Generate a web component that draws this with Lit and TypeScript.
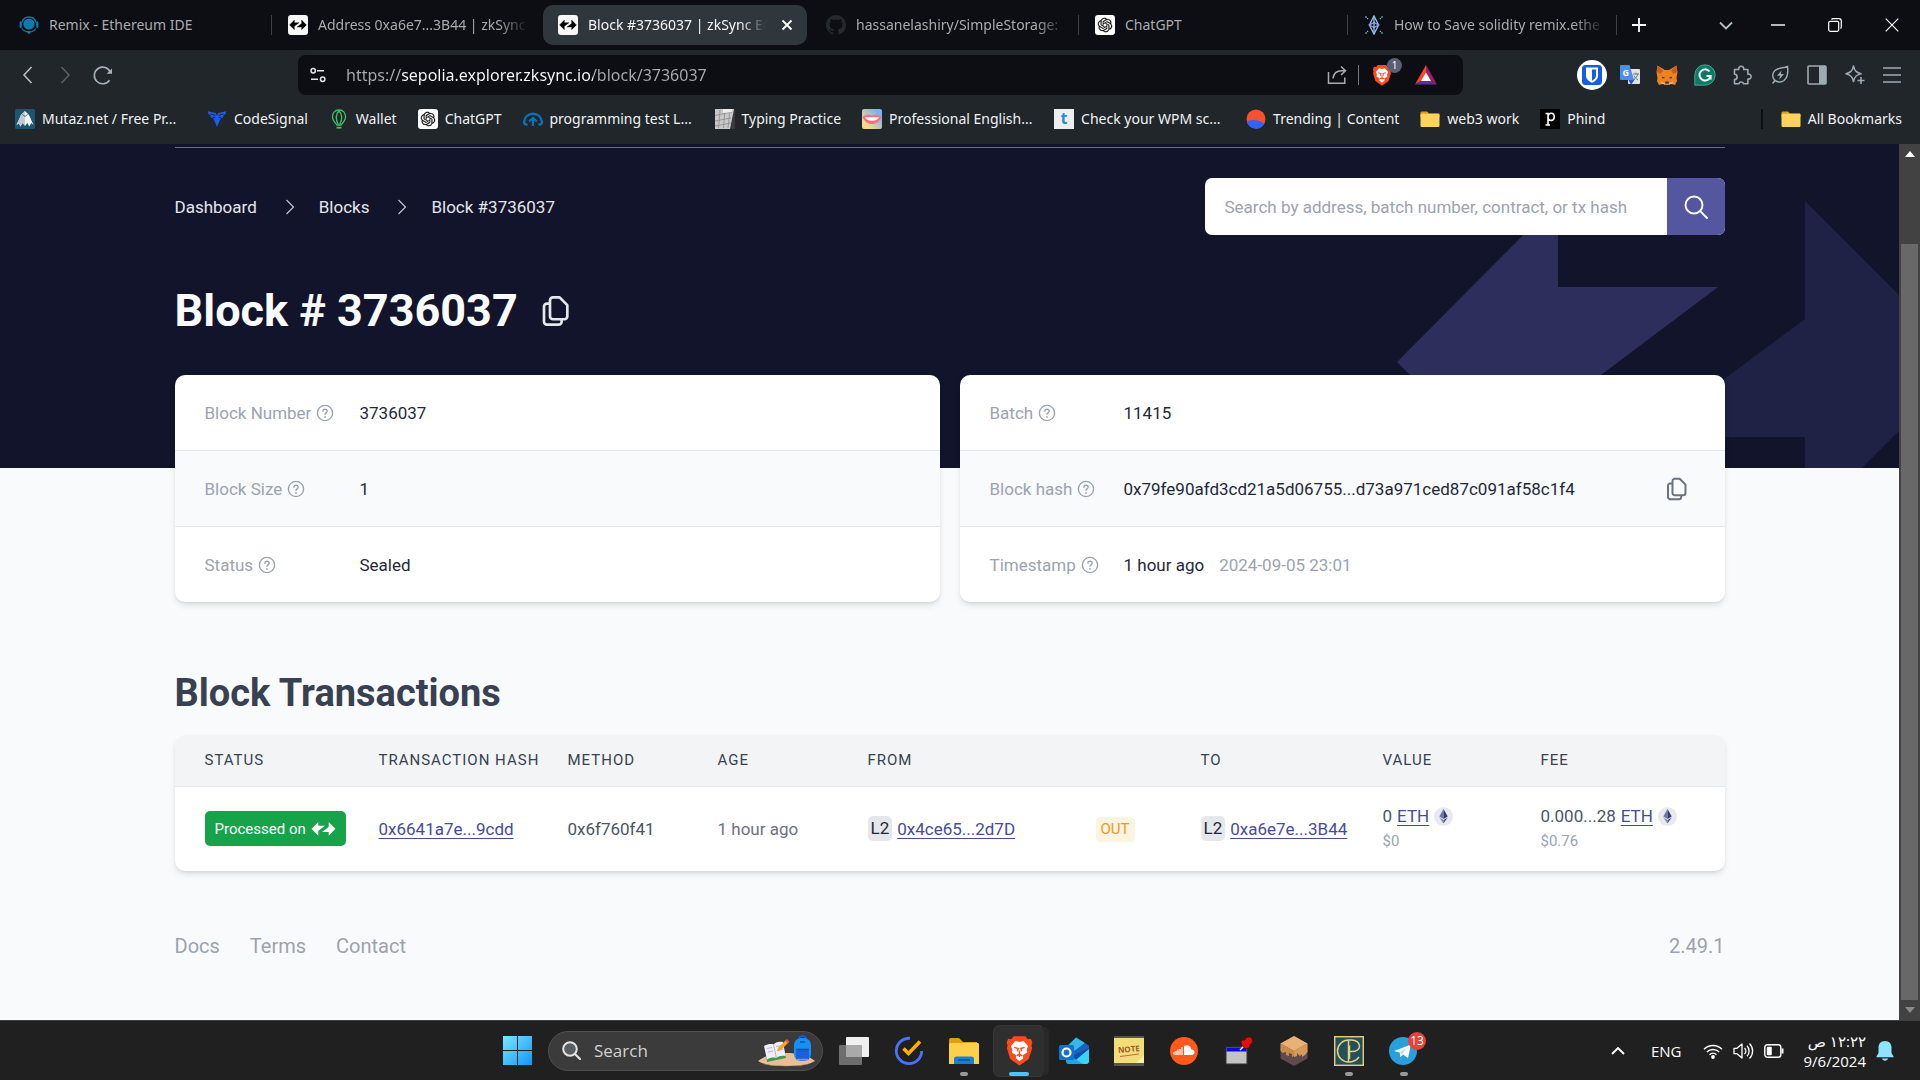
import { LitElement, html, svg, css, nothing, TemplateResult, SVGTemplateResult } from "lit";
import { customElement } from "lit/decorators.js";
import { classMap } from "lit/directives/class-map.js";

const icon = (w: number, h: number, viewBox: string, body: SVGTemplateResult | SVGTemplateResult[]): TemplateResult =>
  html`<svg class="icon" width=${w} height=${h} viewBox=${viewBox} fill="none" aria-hidden="true">${body}</svg>`;

const SYNC_LEFT = "M0 6.830 6.800 0V3.670H13.500L6.800 8.730V13.670Z";
const SYNC_RIGHT = "M24 6.830 17.200 13.670V10H10.500L17.200 5V0Z";

const OPENAI =
  "M22.2819 9.8211a5.9847 5.9847 0 0 0-.5157-4.9108 6.0462 6.0462 0 0 0-6.5098-2.9A6.0651 6.0651 0 0 0 4.9807 4.1818a5.9847 5.9847 0 0 0-3.9977 2.9 6.0462 6.0462 0 0 0 .7427 7.0966 5.98 5.98 0 0 0 .511 4.9107 6.051 6.051 0 0 0 6.5146 2.9001A5.9847 5.9847 0 0 0 13.2599 24a6.0557 6.0557 0 0 0 5.7718-4.2058 5.9894 5.9894 0 0 0 3.9977-2.9001 6.0557 6.0557 0 0 0-.7475-7.0729zm-9.022 12.6081a4.4755 4.4755 0 0 1-2.8764-1.0408l.1419-.0804 4.7783-2.7582a.7948.7948 0 0 0 .3927-.6813v-6.7369l2.02 1.1686a.071.071 0 0 1 .038.052v5.5826a4.504 4.504 0 0 1-4.4945 4.4944zm-9.6607-4.1254a4.4708 4.4708 0 0 1-.5346-3.0137l.142.0852 4.783 2.7582a.7712.7712 0 0 0 .7806 0l5.8428-3.3685v2.3324a.0804.0804 0 0 1-.0332.0615L9.74 19.9502a4.4992 4.4992 0 0 1-6.1408-1.6464zM2.3408 7.8956a4.485 4.485 0 0 1 2.3655-1.9728V11.6a.7664.7664 0 0 0 .3879.6765l5.8144 3.3543-2.0201 1.1685a.0757.0757 0 0 1-.071 0l-4.8303-2.7865A4.504 4.504 0 0 1 2.3408 7.872zm16.5963 3.8558L13.1038 8.364 15.1192 7.2a.0757.0757 0 0 1 .071 0l4.8303 2.7913a4.4944 4.4944 0 0 1-.6765 8.1042v-5.6772a.79.79 0 0 0-.407-.667zm2.0107-3.0231l-.142-.0852-4.7735-2.7818a.7759.7759 0 0 0-.7854 0L9.409 9.2297V6.8974a.0662.0662 0 0 1 .0284-.0615l4.8303-2.7866a4.4992 4.4992 0 0 1 6.6802 4.66zM8.3065 12.863l-2.02-1.1638a.0804.0804 0 0 1-.038-.0567V6.0742a4.4992 4.4992 0 0 1 7.3757-3.4537l-.142.0805L8.704 5.459a.7948.7948 0 0 0-.3927.6813zm1.0976-2.3654l2.602-1.4998 2.6069 1.4998v2.9994l-2.5974 1.4997-2.6067-1.4997Z";

const GITHUB =
  "M8 0C3.58 0 0 3.58 0 8c0 3.54 2.29 6.53 5.47 7.59.4.07.55-.17.55-.38 0-.19-.01-.82-.01-1.49-2.01.37-2.53-.49-2.69-.94-.09-.23-.48-.94-.82-1.13-.28-.15-.68-.52-.01-.53.63-.01 1.08.58 1.23.82.72 1.21 1.87.87 2.33.66.07-.52.28-.87.51-1.07-1.78-.2-3.64-.89-3.64-3.95 0-.87.31-1.59.82-2.15-.08-.2-.36-1.02.08-2.12 0 0 .67-.21 2.2.82.64-.18 1.32-.27 2-.27s1.36.09 2 .27c1.53-1.04 2.2-.82 2.2-.82.44 1.1.16 1.92.08 2.12.51.56.82 1.27.82 2.15 0 3.07-1.87 3.75-3.65 3.95.29.25.54.73.54 1.48 0 1.07-.01 1.93-.01 2.2 0 .21.15.46.55.38A8.01 8.01 0 0 0 16 8c0-4.42-3.58-8-8-8z";

const remixIcon = () =>
  icon(20, 20, "0 0 20 20", svg`
    <path d="M3 7.5a7.2 7.2 0 0 1 14 0" stroke="#0c7cab" stroke-width="1.4"/>
    <circle cx="10" cy="9" r="5.6" fill="#0c7cab"/>
    <rect x="0.6" y="6.5" width="2.2" height="6.5" rx="1.1" fill="#0c7cab"/>
    <rect x="17.2" y="6.5" width="2.2" height="6.5" rx="1.1" fill="#0c7cab"/>
    <path d="M3 13.5c1.5 2.5 4 3.4 7 3.4s5.500-.9 7-3.400" stroke="#0c7cab" stroke-width="1.200"/>
    <path d="M7.500 16.200h5L10 19.600Z" fill="#0c7cab"/>`);

const syncTile = () =>
  icon(20, 20, "0 0 20 20", svg`
    <rect width="20" height="20" rx="3" fill="#f7f7f7"/>
    <g transform="translate(1.600 5.100) scale(.7)" fill="#000" stroke="#000" stroke-width=".5"><path d=${SYNC_LEFT}/><path d=${SYNC_RIGHT}/></g>`);

const gptTile = () =>
  icon(20, 20, "0 0 20 20", svg`
    <rect width="20" height="20" rx="3" fill="#fff"/>
    <path transform="translate(2.800 2.800) scale(.6)" d=${OPENAI} fill="#111" stroke="#111" stroke-width=".3"/>`);

const githubIcon = () => icon(20, 20, "0 0 16 16", svg`<path d=${GITHUB} fill="#24292e"/>`);

const etherStack = () =>
  icon(20, 20, "0 0 20 20", svg`
    <g stroke="#a9bdf5" stroke-width="1.300">
      <path d="M10 1 14.600 10 10 19 5.400 10Z"/><path d="M5.400 10 10 12.500 14.600 10 10 7.500Z" stroke="#8c9df0"/><path d="M10 1v18" stroke="#8fc3ea"/>
      <path d="M1.500 1.500 4 4M18.500 1.500 16 4M1.500 18.500 4 16M18.500 18.500 16 16" stroke="#7fd0d8" stroke-dasharray="1.500 1"/>
    </g>`);

const folder = () =>
  icon(20, 20, "0 0 20 20", svg`
    <path d="M.5 4c0-1 .6-1.500 1.500-1.500h5l2 2h9.500c.6 0 1 .5 1 1V8H.5Z" fill="#d9a21b"/>
    <rect x=".5" y="4.800" width="19" height="13.200" rx="1.200" fill="#fdd35e"/>`);

const lion = (s: number) =>
  icon(s, s, "0 0 24 24", svg`
    <path d="M7.500 1h9l2 2.200 2.300-.3L22 6l-.8 2 .6 2-2.600 8.500L12 23.600 4.800 18.500 2.200 10l.6-2L2 6l1.200-3.100 2.300.3Z" fill="#fb4a1c"/>
    <path d="M12 5.400 15.200 4.600 18.600 8.600 17.500 11.600 18 13.500 14.600 15.600 14.800 18 12 20.400 9.200 18 9.400 15.600 6 13.500 6.500 11.600 5.400 8.600 8.800 4.600Z" fill="#fff"/>
    <path d="M8 9.600 11 10.500 10.300 12.600M16 9.600 13 10.500 13.700 12.600M12 12v3M9.800 16 12 15l2.200 1M12 15v2" stroke="#fb4a1c" stroke-width="1.100"/>`);

interface Tab { label: string; icon: () => TemplateResult; active?: boolean; divider?: boolean; fade?: boolean; }
const TABS: Tab[] = [
  { label: "Remix - Ethereum IDE", icon: remixIcon, divider: true },
  { label: "Address 0xa6e7...3B44 | zkSync", icon: syncTile, fade: true },
  { label: "Block #3736037 | zkSync Er", icon: syncTile, active: true, fade: true },
  { label: "hassanelashiry/SimpleStorage:", icon: githubIcon, divider: true, fade: true },
  { label: "ChatGPT", icon: gptTile, divider: true },
  { label: "How to Save solidity remix.ethe", icon: etherStack, divider: true, fade: true },
];

interface Bookmark { label: string; icon: () => TemplateResult; long?: boolean; }
const BOOKMARKS: Bookmark[] = [
  { label: "Mutaz.net / Free Pr...", long: true, icon: () => icon(20, 20, "0 0 20 20", svg`
      <rect width="20" height="20" rx="1.500" fill="#1b5672"/>
      <path d="M1.500 16 6 6l4-4 4 4 4.500 10-2.200-2-2 3.500-2-3.500L10 17l-2.500-3-2 3.500-1.600-3Z" fill="#f2f4f5"/>
      <path d="M1.500 16 6 6l4-4v14.500L7.500 14l-2 3.500-1.600-3Z" fill="#c3c9ce"/><path d="M7.500 5.500l2.500 2 2.500-2" stroke="#55707d"/>`) },
  { label: "CodeSignal", icon: () => icon(20, 20, "0 0 20 20", svg`
      <path d="M.8 2.200 8.800 4 10 6.500 11.200 4l8-1.800-.6 3-1.800.6-.6 2.700-2.600 1-3.600 8.600L6.400 9.500l-2.600-1-.6-2.700-1.800-.6Z" fill="#1d5cf0"/>
      <path d="M3.500 5 8.500 6.300M5.500 8l3 .8M16.500 5l-5 1.300M14.500 8l-3 .8" stroke="#20262a" stroke-width=".9"/>`) },
  { label: "Wallet", icon: () => icon(20, 20, "0 0 20 20", svg`
      <g stroke="#3fc164" stroke-width="1.300"><path d="M10 1C5.500 1 3.500 4.500 3.500 8c0 3.300 2.200 5.500 4.500 8h4c2.300-2.500 4.500-4.700 4.500-8 0-3.500-2-7-6.500-7Z"/>
      <path d="M10 2C7 5 6.500 10 9.200 15.500M10 2c3 3 3.500 8 .8 13.500"/><path d="M7.500 18.700h5" stroke-width="1.800"/></g>`) },
  { label: "ChatGPT", icon: gptTile },
  { label: "programming test L...", long: true, icon: () => icon(20, 20, "0 0 20 20", svg`
      <path d="M4.500 15.500H3A2 2 0 0 1 1.200 13C1.500 8 5 4.800 10 4.800S18.500 8 18.800 13a2 2 0 0 1-1.800 2.500h-1.500" stroke="#0c72b5" stroke-width="2.400"/>
      <path d="M10 17V9.500M6 12.500l4-3.500 4 3.500" stroke="#0c72b5" stroke-width="2.200"/>`) },
  { label: "Typing Practice", icon: () => icon(20, 20, "0 0 20 20", svg`
      <rect width="20" height="20" fill="#3a3a3c"/><path d="M0 0h19l-4 20H0Z" fill="#c9c9c9"/>
      <path d="M0 6.500 17 3M0 12l16-3M0 17l16-3M5 1 3.500 19M10 0 8.500 19M15 0l-2 19" stroke="#8b8b8b" stroke-width=".8"/><path d="M8 0h9v3L8 4Z" fill="#eee"/>`) },
  { label: "Professional English...", long: true, icon: () => icon(20, 20, "0 0 20 20", svg`
      <defs><linearGradient id="lip" x1="0" y1="1" x2="1" y2="0"><stop offset=".2" stop-color="#f7d98c"/><stop offset=".8" stop-color="#7fb2f2"/></linearGradient></defs>
      <rect width="20" height="20" rx="2" fill="url(#lip)"/><path d="M.5 8C4 5 8 5.500 10 6.500c2-1 6-1.500 9.500 1.500-2.500 5-5.500 7-9.500 7S3 13 .5 8Z" fill="#f4717f"/>
      <path d="M2.800 8.300h14.400C15.500 11 13 11.800 10 11.800S4.500 11 2.800 8.300Z" fill="#fff"/>`) },
  { label: "Check your WPM sc...", long: true, icon: () => icon(20, 20, "0 0 20 20", svg`
      <rect width="20" height="20" fill="#eceef0"/><text x="10" y="15" font-size="16" font-weight="700" font-family="Open Sans" text-anchor="middle" fill="#1f8fe0">t</text>`) },
  { label: "Trending | Content", icon: () => icon(20, 20, "0 0 20 20", svg`
      <circle cx="10" cy="10" r="9.500" fill="#f4512c"/><path d="M.8 12.500C7 9.500 14 11 18.200 15A9.500 9.500 0 0 1 .8 12.500Z" fill="#2f63ff"/>`) },
  { label: "web3 work", icon: folder },
  { label: "Phind", icon: () => icon(20, 20, "0 0 20 20", svg`
      <rect width="20" height="20" fill="#000"/><path d="M5.500 4.500h2.500V16M8 8c0-2 1.200-3.700 3.200-3.700s3 1.500 3 3.500-1 3.600-3 3.600-3.200-1.400-3.200-3.400M5.500 16h4.500" stroke="#fff" stroke-width="1.600"/>`) },
];

const EXTENSIONS: { name: string; art: () => TemplateResult }[] = [
  { name: "Bitwarden", art: () => icon(30, 30, "0 0 30 30", svg`
      <circle cx="15" cy="15" r="15" fill="#fff"/><rect x="5" y="5" width="20" height="20" rx="3.500" fill="#175ddc"/>
      <path d="M9 7.500h12v8c0 4-3.500 6.200-6 7.300-2.500-1.100-6-3.300-6-7.300Z" fill="#fff"/><path d="M15 9.500h4v6c0 2.500-2 4.200-4 5.200Z" fill="#175ddc"/>`) },
  { name: "Translate", art: () => icon(22, 22, "0 0 22 22", svg`
      <rect x="9" y="5" width="12" height="15" rx="1" fill="#dfe3e8"/><path d="M9 15h7l-4 6Z" fill="#3450c9"/>
      <path d="M1 2a1 1 0 0 1 1-1h8.500L15 16H2a1 1 0 0 1-1-1Z" fill="#4d8bf5"/>
      <text x="6.800" y="12" font-size="9" font-weight="700" font-family="Open Sans" text-anchor="middle" fill="#fff">G</text>
      <path d="M14 10h6M17 8.500V10M18.800 10c-.5 2.500-2.500 4.500-4 5.500M15 11.500c.8 2 2.500 3.500 4 4.500" stroke="#6c7686"/>`) },
  { name: "MetaMask", art: () => icon(22, 22, "0 0 22 22", svg`
      <path d="M1.500 1.500 9 6h4l7.500-4.500L21.500 8l-1 6 .5 3-2 4-4.500-1.300-2 1.300h-3l-2-1.300L3 21l-2-4 .5-3-1-6Z" fill="#f0811f"/>
      <path d="M1.500 1.500 7 6.500 4.500 10 1 8ZM20.500 1.500 15 6.500l2.500 3.500L21 8Z" fill="#c2601f"/>
      <path d="M6 12.500l3.300 1.600-2.800.3ZM16 12.500l-3.300 1.600 2.800.3Z" fill="#233447"/><path d="M9.500 17.500h3l.5 2h-4Z" fill="#2b3a4a"/><path d="M5 17.500 9 19.500v1.300L5.500 19.500ZM17 17.500 13 19.500v1.300l3.500-1.300Z" fill="#d9bfad"/>`) },
  { name: "Grammarly", art: () => icon(22, 22, "0 0 22 22", svg`
      <path d="M11 .8a10.200 10.200 0 0 1 0 20.400H.8V11A10.200 10.200 0 0 1 11 .8Z" fill="#0b7a67"/>
      <path d="M11 .8a10.200 10.200 0 0 1 0 20.400H.8V11A10.200 10.200 0 0 1 11 .8Z" stroke="#56b8a4" stroke-width=".8"/>
      <path d="M15.500 7.500A5.600 5.600 0 1 0 16.600 12H12.500M16.600 12v3.500" stroke="#fff" stroke-width="2"/>`) },
  { name: "Extensions", art: () => icon(22, 22, "0 0 22 22", svg`
      <path d="M3.500 5.500h4.200a2.600 2.600 0 1 1 5 0h4.200v4.700a2.500 2.500 0 1 1 0 4.800v4.800h-4.300a2.500 2.500 0 0 0-4.800 0H3.500v-4.300a2.600 2.600 0 1 0 0-5.200Z" stroke="#9dabb3" stroke-width="1.600" stroke-linejoin="round"/>`) },
  { name: "Energy saver", art: () => icon(22, 22, "0 0 22 22", svg`
      <path d="M18.500 2.500c.8 6 .2 11-3.500 14-3 2.300-7.500 1.700-9.700-.8-2.200-2.700-2.100-6.700.7-9.200 3.500-3 8-2.200 12.500-4ZM3.500 19.500l2.300-2.700" stroke="#9dabb3" stroke-width="1.500"/>
      <path d="M12.500 6.500 8 11.800h3L10.200 15.800 15 10h-3.200Z" fill="#9dabb3"/>`) },
  { name: "Sidebar", art: () => icon(22, 22, "0 0 22 22", svg`
      <rect x="2" y="2" width="18" height="18" rx="1" stroke="#9dabb3" stroke-width="1.600"/><rect x="13" y="2" width="7" height="18" fill="#9dabb3"/>`) },
  { name: "Leo", art: () => icon(22, 22, "0 0 22 22", svg`
      <path d="M9.500 2c.8 4.500 2.500 6.500 7.500 7.700-5 1.200-6.700 3.200-7.500 7.800C8.700 13 7 11 2 9.700 7 8.500 8.700 6.500 9.500 2Z" stroke="#9dabb3" stroke-width="1.600" stroke-linejoin="round"/>
      <path d="M17 13v7M13.500 16.500h7" stroke="#9dabb3" stroke-width="1.600"/>`) },
  { name: "Menu", art: () => icon(22, 22, "0 0 22 22", svg`<path d="M2 4h18M2 11h18M2 18h18" stroke="#9dabb3" stroke-width="1.500"/>`) },
];

const controls = css`
  * { box-sizing: border-box; }
  button { appearance: none; border: 0; padding: 0; margin: 0; background: none; color: inherit; font: inherit; display: flex; align-items: center; justify-content: center; cursor: pointer; }
  a { color: inherit; text-decoration: none; }
  input { border: 0; outline: 0; padding: 0; margin: 0; background: none; font: inherit; color: inherit; min-width: 0; }
  ul { list-style: none; margin: 0; padding: 0; }
  .icon { display: block; flex: none; }
`;

@customElement("browser-chrome")
export class BrowserChrome extends LitElement {
  static styles = [controls, css`
    :host { display: block; flex: none; background: #20262a; color: #f1f3f4; font-family: "Segoe UI", "Noto Sans", "Open Sans", sans-serif; font-size: 14px; }
    .strip { display: flex; align-items: center; height: 50px; padding-left: 3px; background: #0d0e13; }
    .tabs { display: grid; grid-template-columns: repeat(6, minmax(0, 1fr)); flex: 0 1 1614px; min-width: 0; height: 40px; }
    .tab { position: relative; display: flex; align-items: center; gap: 10px; min-width: 0; padding: 0 8px 0 16px; color: #a9abae; border-radius: 10px; }
    .tab.active { margin: 0 3px 0 2px; padding: 0 12px 0 15px; background: #30373c; color: #f4f5f6; }
    .tab.divider::after { content: ""; position: absolute; right: 0; top: 10px; width: 1px; height: 20px; background: #384247; }
    .title { flex: 1; display: block; min-width: 0; height: 20px; line-height: 20px; text-align: left; white-space: nowrap; overflow: hidden; }
    .fade { -webkit-mask-image: linear-gradient(90deg, #000 84%, transparent 98%); mask-image: linear-gradient(90deg, #000 84%, transparent 98%); }
    .close { width: 16px; height: 16px; }
    .new { width: 44px; height: 40px; }
    .window { display: flex; margin-left: auto; align-items: center; }
    .window button { width: 57px; height: 50px; }
    .window .list { width: 46px; }
    .bar { display: flex; align-items: center; height: 50px; padding: 0 13px 0 16px; }
    .nav { display: flex; gap: 16px; width: 282px; flex: none; }
    .nav button { width: 22px; height: 22px; }
    .address { display: flex; align-items: center; flex: 0 1 1165px; height: 40px; padding: 0 22px 0 12px; border-radius: 8px; background: #0d0e13; }
    .url { flex: 1; height: 30px; margin-left: 20px; font-size: 16px; color: transparent;
      background: linear-gradient(90deg, #a9adb3 55px, #fff 55px, #fff 247px, #a9adb3 247px); -webkit-background-clip: text; background-clip: text; }
    .address button { width: 30px; height: 30px; }
    .rule { width: 1px; height: 20px; margin: 0 8px 0 6px; background: #777b80; }
    .shield { position: relative; margin-right: 14px; }
    .count { position: absolute; top: -2px; right: -5px; width: 15px; height: 15px; border-radius: 8px; background: #5b5f72; color: #fff; font-size: 10px; line-height: 15px; text-align: center; }
    .exts { display: flex; flex: none; width: 330px; margin-left: auto; justify-content: space-between; }
    .exts button { width: 30px; height: 30px; }
    .marks { display: flex; align-items: center; height: 44px; padding: 0 18px 6px 15px; white-space: nowrap; }
    .marks ul { display: flex; gap: 21px; }
    .mark { display: flex; align-items: center; gap: 7px; height: 20px; line-height: 20px; }
    .mark.long { width: 171px; }
    .all { display: flex; margin-left: auto; padding-left: 18px; border-left: 2px solid #0d0e13; }
  `];

  private tab(t: Tab) {
    return html`<li class=${classMap({ tab: true, active: !!t.active, divider: !!t.divider })}>
      ${t.icon()}<button class=${classMap({ title: true, fade: !!t.fade })}>${t.label}</button>
      ${t.active ? html`<button class="close" aria-label="Close tab">${icon(12, 12, "0 0 12 12", svg`<path d="M1.500 1.500l9 9M10.500 1.500l-9 9" stroke="#fff" stroke-width="1.800"/>`)}</button>` : nothing}
    </li>`;
  }

  render() {
    return html`
      <div class="strip">
        <ul class="tabs">${TABS.map((t) => this.tab(t))}</ul>
        <button class="new" aria-label="New tab">${icon(14, 14, "0 0 14 14", svg`<path d="M7 0v14M0 7h14" stroke="#fff" stroke-width="1.800"/>`)}</button>
        <div class="window">
          <button class="list" aria-label="Search tabs">${icon(14, 9, "0 0 14 9", svg`<path d="M1 1.500l6 6 6-6" stroke="#b4c0c6" stroke-width="1.800"/>`)}</button>
          <button aria-label="Minimize">${icon(14, 2, "0 0 14 2", svg`<path d="M0 1h14" stroke="#fff" stroke-width="1.400"/>`)}</button>
          <button aria-label="Restore">${icon(14, 14, "0 0 14 14", svg`<rect x=".7" y="3.300" width="10" height="10" rx="1.500" stroke="#fff" stroke-width="1.200"/><path d="M3.500 1.500C4 .9 4.500.7 5 .7h6a2.300 2.300 0 0 1 2.300 2.300v6c0 .7-.3 1.200-.8 1.600" stroke="#fff" stroke-width="1.200"/>`)}</button>
          <button aria-label="Close window">${icon(14, 14, "0 0 14 14", svg`<path d="M.7.7l12.600 12.600M13.300.7.7 13.300" stroke="#fff" stroke-width="1.200"/>`)}</button>
        </div>
      </div>
      <div class="bar">
        <div class="nav">
          <button aria-label="Back">${icon(20, 20, "0 0 20 20", svg`<path d="M14.500 2 7 10l7.500 8" stroke="#bac3c8" stroke-width="1.500"/>`)}</button>
          <button aria-label="Forward">${icon(20, 20, "0 0 20 20", svg`<path d="M6.500 2 14 10l-7.500 8" stroke="#596167" stroke-width="1.500"/>`)}</button>
          <button aria-label="Reload">${icon(20, 20, "0 0 20 20", svg`<path d="M16.500 15.200A8.300 8.300 0 1 1 17.400 7.500" stroke="#a7b3ba" stroke-width="1.600"/><path d="M19 3.500v5.300h-5.300Z" fill="#a7b3ba"/>`)}</button>
        </div>
        <div class="address">
          ${icon(16, 16, "0 0 16 16", svg`<g stroke="#e3e6e8" stroke-width="1.500"><circle cx="3.200" cy="3.700" r="2.200"/><path d="M7 3.700h7M1 12.300h7"/><circle cx="12.700" cy="12.300" r="2.200"/></g>`)}
          <input class="url" type="text" aria-label="Address" .value=${"https://sepolia.explorer.zksync.io/block/3736037"} />
          <button aria-label="Share">${icon(20, 20, "0 0 20 20", svg`<path d="M1.500 7v11.300h16.300V12.500" stroke="#a6acb1" stroke-width="1.500"/><path d="M6 13.500C6.500 8.500 9.500 5.800 15 5.800h3M14 1.500l4.500 4.300L14 10" stroke="#a6acb1" stroke-width="1.500"/>`)}</button>
          <span class="rule"></span>
          <button class="shield" aria-label="Shields">${lion(22)}<span class="count">1</span></button>
          <button aria-label="Rewards">${icon(22, 20, "0 0 22 20", svg`<path d="M11 0 0 19.500 11 12.500Z" fill="#ff4724"/><path d="M11 0v12.500l11 7Z" fill="#9e1f63"/><path d="M0 19.500h22l-11-7Z" fill="#662d91"/><path d="M11 7.500 6 16h10Z" fill="#fff"/>`)}</button>
        </div>
        <div class="exts">${EXTENSIONS.map((e) => html`<button aria-label=${e.name}>${e.art()}</button>`)}</div>
      </div>
      <nav class="marks">
        <ul>${BOOKMARKS.map((b) => html`<li><a href="#" class=${classMap({ mark: true, long: !!b.long })}>${b.icon()}<span>${b.label}</span></a></li>`)}</ul>
        <div class="all"><a href="#" class="mark">${folder()}<span>All Bookmarks</span></a></div>
      </nav>`;
  }
}

const help = () =>
  icon(18, 18, "0 0 18 18", svg`<g stroke="#9ca3af" stroke-width="1.400" stroke-linecap="round"><circle cx="9" cy="9" r="7.600"/><path d="M6.900 7.200c0-1.200.9-2 2.100-2s2.200.8 2.200 1.900c0 1.700-2.200 1.700-2.200 3.200"/><path d="M9 12.800v.1" stroke-width="1.700"/></g>`);

const copy = (s: number, color: string) =>
  icon(s, s, "0 0 24 24", svg`<g stroke=${color} stroke-width="2" stroke-linejoin="round"><path d="M7.500 4a2.200 2.200 0 0 1 2.200-2.200h5L20.500 7.600V16a2.200 2.200 0 0 1-2.200 2.200H9.700A2.200 2.200 0 0 1 7.500 16Z"/><path d="M7.500 6.500H5.200A2.200 2.200 0 0 0 3 8.700V20a2.200 2.200 0 0 0 2.200 2.200h8.800A2.200 2.200 0 0 0 16.200 20v-1.800"/></g>`);

const eth = () =>
  icon(19, 19, "0 0 19 19", svg`
    <circle cx="9.500" cy="9.500" r="9.500" fill="#e8e9ee"/><path d="M9.500 2 5.300 9.500l4.200 2.400Z" fill="#7076a8"/><path d="M9.500 2l4.200 7.500-4.200 2.400Z" fill="#343c70"/>
    <path d="M5.300 10.600l4.200 6v-3.500Z" fill="#8086b4"/><path d="M13.700 10.600l-4.200 6v-3.500Z" fill="#4b5288"/>`);

interface Fact { label: string; value: string; extra?: string; copyable?: boolean; }
const FACTS: { wide: boolean; rows: Fact[] }[] = [
  { wide: true, rows: [
    { label: "Block Number", value: "3736037" },
    { label: "Block Size", value: "1" },
    { label: "Status", value: "Sealed" } ] },
  { wide: false, rows: [
    { label: "Batch", value: "11415" },
    { label: "Block hash", value: "0x79fe90afd3cd21a5d06755...d73a971ced87c091af58c1f4", copyable: true },
    { label: "Timestamp", value: "1 hour ago", extra: "2024-09-05 23:01" } ] },
];

@customElement("block-page")
export class BlockPage extends LitElement {
  static styles = [controls, css`
    :host { display: flex; flex: 1; min-height: 0; background: #f9fafc; color: #1f2937; font-family: Roboto, sans-serif; font-size: 17px; line-height: 24px; }
    main { flex: 1; min-width: 0; }
    .wrap { position: relative; max-width: 1550px; margin: 0 auto; }
    .hero { position: relative; overflow: hidden; padding: 3px 0 132px; background: #11142b; color: #e5e7eb; }
    .art { position: absolute; right: 0; top: 0; }
    .top { display: flex; align-items: center; justify-content: space-between; padding-top: 30px; border-top: 1px solid #6b6d7e; }
    .crumbs { display: flex; align-items: center; gap: 24px; }
    .search { display: flex; width: 520px; height: 57px; border-radius: 7px; overflow: hidden; background: #fff; }
    .search input { flex: 1; padding-left: 20px; color: #374151; }
    .search input::placeholder { color: #9ca3af; opacity: 1; }
    .search button { width: 58px; background: #5457a0; }
    h1 { display: flex; align-items: center; gap: 22px; margin: 51px 0 0; font-size: 45px; line-height: 50px; font-weight: 700; color: #f9fafb; }
    .cards { display: grid; grid-template-columns: 1fr 1fr; gap: 20px; margin-top: -93px; }
    .card, .table { border-radius: 10px; overflow: hidden; background: #fff; box-shadow: 0 4px 7px -1px #0000001c, 0 2px 4px -2px #0000001c; }
    .card { margin: 0; }
    .fact { display: grid; grid-template-columns: 134px 1fr auto; align-items: center; height: 75px; padding: 0 36px 0 30px; }
    .wide .fact { grid-template-columns: 155px 1fr auto; }
    .fact + .fact { height: 76px; border-top: 1px solid #e5e7eb; }
    .fact:nth-child(even) { background: #f9fafc; }
    dt { display: flex; align-items: center; gap: 5px; color: #9ca3af; white-space: nowrap; }
    dd { margin: 0; }
    .muted { margin-left: 15px; color: #9ca3af; }
    h2 { margin: 69px 0 19px; font-size: 38px; line-height: 45px; font-weight: 700; color: #374151; }
    table { width: 100%; table-layout: fixed; border-collapse: collapse; }
    th { height: 51px; padding: 0; background: #f3f4f6; border-bottom: 1px solid #e5e7eb; text-align: left; font-size: 15px; line-height: 20px; font-weight: 400; letter-spacing: 1px; color: #374151; white-space: nowrap; }
    td { height: 85px; padding: 0; white-space: nowrap; color: #4b5563; }
    th:first-child, td:first-child { padding-left: 30px; }
    .c-status { width: 204px; } .c-hash { width: 189px; } .c-mid { width: 150px; } .c-from { width: 228px; } .c-dir { width: 105px; } .c-to { width: 182px; } .c-value { width: 158px; }
    .link { color: #474c9a; text-decoration: underline; text-underline-offset: 3px; text-decoration-thickness: 1px; }
    .ok { display: inline-flex; align-items: center; gap: 5px; height: 35px; padding: 0 10px; border-radius: 5px; background: #17a34a; color: #fff; font-size: 15px; vertical-align: middle; }
    .age { color: #6b7280; }
    .party { display: flex; align-items: center; gap: 5px; }
    .layer { padding: 0 3px; border-radius: 5px; background: #e5e7eb; color: #1f2937; line-height: 25px; }
    .out { display: inline-block; padding: 0 5px; border-radius: 5px; background: #fdf3e1; color: #ec9a1c; font-size: 15px; line-height: 25px; vertical-align: middle; }
    .amount { display: flex; align-items: center; gap: 5px; line-height: 25px; }
    .usd { font-size: 15px; line-height: 25px; color: #9ca3af; }
    footer { display: flex; gap: 30px; margin-top: 60px; font-size: 20px; line-height: 30px; color: #9ca3af; }
    .version { margin-left: auto; }
    .scroll { display: flex; flex-direction: column; flex: none; width: 21px; padding: 0 2px; background: #424242; }
    .scroll button { height: 20px; }
    .thumb { flex: 1; margin-top: 80px; background: #686868; }
  `];

  render() {
    return html`
      <main>
        <header class="hero">
          <svg class="art" width="520" height="324" viewBox="1379 144 520 324" aria-hidden="true">
            <path d="M1558 200V287H1718L1577 393H1428L1397 362Z" fill="#2d2e5c"/>
            <path d="M1805 201 1940 336V390L1862 468H1805V437H1646L1805 319Z" fill="#1f2145"/>
          </svg>
          <div class="wrap">
            <div class="top">
              <nav class="crumbs">
                <a href="#">Dashboard</a>${this.arrow()}<a href="#">Blocks</a>${this.arrow()}<span>Block #3736037</span>
              </nav>
              <form class="search" @submit=${(e: Event) => e.preventDefault()}>
                <input type="text" aria-label="Search" placeholder="Search by address, batch number, contract, or tx hash" />
                <button aria-label="Search">${icon(24, 24, "0 0 24 24", svg`<g stroke="#fff" stroke-width="1.900" stroke-linecap="round"><circle cx="10" cy="10" r="8.500"/><path d="M16.200 16.200 23 23"/></g>`)}</button>
              </form>
            </div>
            <h1>Block # 3736037 <button aria-label="Copy block number">${copy(32, "#e5e7eb")}</button></h1>
          </div>
        </header>
        <div class="wrap">
          <section class="cards">
            ${FACTS.map((c) => html`<dl class=${classMap({ card: true, wide: c.wide })}>
              ${c.rows.map((r) => html`<div class="fact">
                <dt>${r.label} ${help()}</dt>
                <dd>${r.value}${r.extra ? html`<span class="muted">${r.extra}</span>` : nothing}</dd>
                ${r.copyable ? html`<button aria-label="Copy block hash">${copy(24, "#6b7280")}</button>` : nothing}
              </div>`)}
            </dl>`)}
          </section>
          <h2>Block Transactions</h2>
          <div class="table">
            <table>
              <colgroup><col class="c-status" /><col class="c-hash" /><col class="c-mid" /><col class="c-mid" /><col class="c-from" /><col class="c-dir" /><col class="c-to" /><col class="c-value" /><col /></colgroup>
              <thead><tr><th>STATUS</th><th>TRANSACTION HASH</th><th>METHOD</th><th>AGE</th><th>FROM</th><th></th><th>TO</th><th>VALUE</th><th>FEE</th></tr></thead>
              <tbody><tr>
                <td><span class="ok">Processed on ${icon(25, 14, "0 0 24 14", svg`<g fill="#fff"><path d=${SYNC_LEFT}/><path d=${SYNC_RIGHT}/></g>`)}</span></td>
                <td><a href="#" class="link">0x6641a7e...9cdd</a></td>
                <td>0x6f760f41</td>
                <td class="age">1 hour ago</td>
                <td><div class="party"><span class="layer">L2</span><a href="#" class="link">0x4ce65...2d7D</a></div></td>
                <td><span class="out">OUT</span></td>
                <td><div class="party"><span class="layer">L2</span><a href="#" class="link">0xa6e7e...3B44</a></div></td>
                <td><div class="amount">0 <a href="#" class="link">ETH</a>${eth()}</div><div class="usd">$0</div></td>
                <td><div class="amount">0.000...28 <a href="#" class="link">ETH</a>${eth()}</div><div class="usd">$0.76</div></td>
              </tr></tbody>
            </table>
          </div>
          <footer><a href="#">Docs</a><a href="#">Terms</a><a href="#">Contact</a><span class="version">2.49.1</span></footer>
        </div>
      </main>
      <div class="scroll">
        <button aria-label="Scroll up">${icon(10, 6, "0 0 10 6", svg`<path d="M5 0l5 6H0Z" fill="#fff"/>`)}</button>
        <div class="thumb"></div>
        <button aria-label="Scroll down">${icon(10, 6, "0 0 10 6", svg`<path d="M5 6 0 0h10Z" fill="#8a8a8a"/>`)}</button>
      </div>`;
  }

  private arrow() {
    return icon(14, 16, "-4 0 14 16", svg`<path d="M1.500 1l7 7-7 7" stroke="#c3c6cf" stroke-width="1.200"/>`);
  }
}

interface Pinned { name: string; art: () => TemplateResult; state?: "running" | "active"; badge?: string; }
const PINNED: Pinned[] = [
  { name: "Task view", art: () => icon(30, 30, "0 0 30 30", svg`
      <rect x="7" y="1" width="23" height="20" rx="1" fill="#f0f0f0"/><rect x="0" y="9" width="23" height="20" rx="1" fill="#7b7b7b" fill-opacity=".85"/><rect x="7" y="9" width="16" height="12" fill="#a9a9a9"/>`) },
  { name: "TickTick", art: () => icon(30, 30, "0 0 30 30", svg`
      <path d="M16 2.300A12.700 12.700 0 1 0 27.700 15" stroke="#4772fa" stroke-width="2.800"/><path d="M9.500 12.500l5 5L26 5.500" stroke="#ffb000" stroke-width="3.600"/>`) },
  { name: "File Explorer", state: "running", art: () => icon(30, 30, "0 0 30 30", svg`
      <path d="M0 4a2 2 0 0 1 2-2h8l4 4h14v6H0Z" fill="#dca013"/><path d="M0 8.500C0 7.500.5 7 1.500 7h27c1 0 1.500.5 1.500 1.500V28H0Z" fill="#fdd04b"/>
      <path d="M5 23a2.500 2.500 0 0 1 2.500-2.500h15A2.500 2.500 0 0 1 25 23v5H5Z" fill="#1a7fd0"/><path d="M9 24h12" stroke="#0a4c93" stroke-width="1.300"/>`) },
  { name: "Brave", state: "active", art: () => lion(31) },
  { name: "Outlook", art: () => icon(30, 30, "0 0 30 30", svg`
      <path d="M7 11 17 1.500l13 8.500v15a3 3 0 0 1-3 3H10a3 3 0 0 1-3-3Z" fill="#0b4fa8"/><path d="M8 10.500 17 1.500l9 5.500-10 8Z" fill="#36b7ee"/><path d="M26 7l4 3v2L15 19l-1-3Z" fill="#1663c0"/><path d="M30 13v12a3 3 0 0 1-3 3H12Z" fill="#3cd2f5"/><path d="M7 17l17 11H10a3 3 0 0 1-3-3Z" fill="#22a5e6"/>
      <rect x="0" y="9" width="15" height="15" rx="1.500" fill="#1272cf"/><circle cx="7.500" cy="16.500" r="4" stroke="#fff" stroke-width="2.200"/>`) },
  { name: "Notes", art: () => icon(30, 30, "0 0 30 30", svg`
      <rect width="30" height="30" fill="#555"/><path d="M0 2h30v20l-5 5H0Z" fill="#f2dd79"/><path d="M22 27l8-7v7Z" fill="#fbf0a8"/>
      <text x="15" y="16" font-size="8" font-weight="700" font-family="Open Sans" text-anchor="middle" fill="#9a5a2a" transform="rotate(-5 15 15)">NOTE</text><path d="M6 20.500 25 18" stroke="#c06a3a"/>`) },
  { name: "SoundCloud", art: () => icon(30, 30, "0 0 30 30", svg`
      <circle cx="15" cy="15" r="14" fill="#ff5a1c"/><path d="M15 10c4-2 7 .5 7.300 3.500 2-.2 3.200 1 3.200 2.700S24 19 22.500 19H15Z" fill="#fff"/><path d="M13 11v8M11 13v6M9 13.500V19M7 15v4M5 16v2.500" stroke="#fff" stroke-width="1.300"/>`) },
  { name: "DeskPins", art: () => icon(30, 30, "0 0 30 30", svg`
      <rect x="2" y="11" width="21" height="17" fill="#c3c3c3" stroke="#333"/><rect x="2.500" y="11.500" width="20" height="4" fill="#0a0ae0"/>
      <path d="M16 14l4-4" stroke="#eee" stroke-width="1.500"/><path d="M17 6.500c0-2 2-3 4-2.500 0-2 2-3 4-3 2.500 0 4 2 3.500 4.500-.4 2-1.500 2.500-2.500 3 .5 2-1 4-3.500 4-2 0-3-1-3-2.500-1.500-.5-2.500-1.500-2.500-3.500Z" fill="#e01010" stroke="#600" stroke-width=".8"/>`) },
  { name: "Launcher", art: () => icon(30, 30, "0 0 30 30", svg`
      <path d="M15 0 28.500 7.500v15L15 30 1.500 22.500v-15Z" fill="#5f4a4d"/><path d="M15 0 28.500 7.500 15 15 1.500 7.500Z" fill="#e9b177"/>
      <path d="M1.500 7.500 15 15v5l-2 1v-3l-3-1v3l-3-1v-3l-3 1-2.500-2Z" fill="#c98b4c"/><path d="M28.500 7.500 15 15v6l3-1v-3l3 3 2-2v3l3-2 2.500-3Z" fill="#d99a58"/>`) },
  { name: "Reader", state: "running", art: () => icon(30, 30, "0 0 30 30", svg`
      <rect x=".7" y=".7" width="28.600" height="28.600" fill="#23505a" stroke="#e5cf7f" stroke-width="1.400"/>
      <path d="M14.500 4A11 11 0 1 0 14.500 26C19 26 22.500 24.500 25 21M14.500 3.500V26.500M13.500 4h4C22 4 25.500 6.500 25.500 10S22 15.500 18 15.500H14.500M15.500 23V9.500" stroke="#e5cf7f" stroke-width="1.500"/>`) },
  { name: "Telegram", state: "running", badge: "13", art: () => icon(30, 30, "0 0 30 30", svg`
      <circle cx="14" cy="15" r="14" fill="#27a0dc"/><path d="M5 15 22 8.500 19 22l-5-3.500-2.700 2.700-.6-4.700Z" fill="#fff"/><path d="M10.700 16.500 19 11l-6.500 7Z" fill="#b5d9ee"/>`) },
];

@customElement("task-bar")
export class TaskBar extends LitElement {
  static styles = [controls, css`
    :host { box-sizing: border-box; display: flex; flex: none; align-items: center; height: 60px; padding-left: 503px; border-top: 1px solid #3c3e40; background: #202020; color: #fff; font-family: "Segoe UI", "Open Sans", "DejaVu Sans", sans-serif; font-size: 15px; }
    .find { display: flex; align-items: center; gap: 13px; width: 275px; height: 40px; margin: 0 6px 0 16px; padding: 0 7px 0 13px; border: 1px solid #505050; border-radius: 20px; background: #3b3b3b; }
    .find input { flex: 1; font-size: 17px; }
    .find input::placeholder { color: #d2d2d2; opacity: 1; }
    .apps { display: flex; gap: 5px; height: 50px; }
    .app { position: relative; width: 50px; height: 50px; border-radius: 6px; }
    .app.active { background: #2f2f2f; box-shadow: 6px 0 0 -1px #282828, 0 0 0 1px #383838; }
    .app.running::after, .app.active::after { content: ""; position: absolute; bottom: 0; left: 21px; width: 8px; height: 4px; border-radius: 2px; background: #999; }
    .app.active::after { left: 15px; width: 20px; background: #4cc2ff; }
    .badge { position: absolute; top: 6px; right: 3px; width: 18px; height: 18px; border-radius: 9px; background: #e8413c; color: #fff; font-size: 12px; line-height: 18px; text-align: center; }
    .tray { display: flex; align-items: center; gap: 10px; margin-left: auto; padding-right: 26px; }
    .tray .up { width: 34px; height: 30px; }
    .lang { padding: 0 11px 0 6px; }
    .clock { display: grid; justify-items: end; margin-left: 10px; line-height: 20px; }
  `];

  render() {
    return html`
      <button aria-label="Start">${icon(29, 29, "0 0 29 29", svg`
        <defs><linearGradient id="win" x1="0" y1="0" x2="1" y2="1"><stop stop-color="#7be6ff"/><stop offset="1" stop-color="#1296f5"/></linearGradient></defs>
        <path d="M0 0h14v14H0ZM15 0h14v14H15ZM0 15h14v14H0ZM15 15h14v14H15Z" fill="url(#win)"/>`)}</button>
      <label class="find">
        ${icon(19, 19, "0 0 19 19", svg`<circle cx="8" cy="8" r="6.800" stroke="#e4e4e4" stroke-width="2" fill="#5b5e60"/><path d="M13 13l5 5" stroke="#e4e4e4" stroke-width="2.200" stroke-linecap="round"/>`)}
        <input type="text" aria-label="Search" placeholder="Search" />
        ${icon(57, 32, "0 0 57 32", svg`
          <path d="M0 26C8 20 16 18 28 18s22 2 29 8c-6 4-16 5-28 5S6 30 0 26Z" fill="#e6bf95"/><path d="M4 28.500c12 3 36 3 48 0-6 3.500-42 3.500-48 0Z" fill="#b98b62"/>
          <path d="M7 12 16 9l9-1 3 15-19 4Z" fill="#3f9a4d"/><path d="M6 11c4-2 7-2.500 9.500-1.500C18 7 21 6.500 25 7l2.500 14c-4-.5-7 0-9 2-3-1-6-.5-9.500 1.500Z" fill="#f1eefb"/><path d="M15.500 9.500 18.500 23M9 13.500l5-1M10 17l5-1M18 11.500l6-1M19 15.500l6-1" stroke="#b9b1d6"/>
          <path d="M20 13 28 5l2.500 2.500L23 15l-4 1Z" fill="#f5a623"/><path d="M27 5.500 29 4l2.500 2.500-1.500 2Z" fill="#e5534b"/>
          <path d="M41 4c0-4 7-4 7 0" stroke="#1b62c9" stroke-width="1.500"/><rect x="36" y="3" width="17" height="23" rx="7" fill="#178ff5"/><rect x="38" y="15" width="13" height="10" rx="2" fill="#1b5fdc"/><path d="M38 14.500h13M42 7h5" stroke="#0d4fae" stroke-width="1.300"/><path d="M39 24.500h11" stroke="#b07af0" stroke-width="1.500"/>`)}
      </label>
      <div class="apps">
        ${PINNED.map((p) => html`<button class=${classMap({ app: true, running: p.state === "running", active: p.state === "active" })} aria-label=${p.name}>
          ${p.art()}${p.badge ? html`<span class="badge">${p.badge}</span>` : nothing}</button>`)}
      </div>
      <div class="tray">
        <button class="up" aria-label="Show hidden icons">${icon(14, 9, "0 0 14 9", svg`<path d="M1 8l6-6 6 6" stroke="#fff" stroke-width="1.900"/>`)}</button>
        <span class="lang">ENG</span>
        ${icon(20, 16, "0 0 20 16", svg`<g stroke="#fff" stroke-width="1.400"><path d="M1 6.300a12.700 12.700 0 0 1 18 0"/><path d="M3.800 9a8.800 8.800 0 0 1 12.400 0"/><path d="M6.500 11.700a5 5 0 0 1 7 0"/></g><circle cx="10" cy="14" r="1.900" fill="#fff"/>`)}
        ${icon(21, 18, "0 0 21 18", svg`<g stroke="#fff" stroke-width="1.300" stroke-linejoin="round"><path d="M1 6.300h3L9 2v14l-5-4.300H1Z"/><path d="M11.500 6a4 4 0 0 1 0 6M14 3.800a7.500 7.500 0 0 1 0 10.400M16.500 1.500a10.600 10.600 0 0 1 0 15"/></g>`)}
        ${icon(20, 14, "0 0 20 14", svg`<rect x=".8" y=".8" width="16" height="12.400" rx="2.500" stroke="#fff" stroke-width="1.400"/><rect x="2.800" y="2.800" width="5" height="8.400" rx="1" fill="#fff"/><path d="M18.500 4.500v5" stroke="#fff" stroke-width="2"/>`)}
        <div class="clock"><span dir="rtl" lang="ar">١٢:٢٢ ص</span><span>9/6/2024</span></div>
        ${icon(18, 20, "0 0 18 20", svg`<path d="M9 0c4 0 6.500 2.800 6.500 6.500V12l2 3.500v.8H.5v-.8l2-3.500V6.500C2.500 2.800 5 0 9 0Z" fill="#8fe3ff"/><path d="M6 17.500h6c-.3 1.400-1.500 2.200-3 2.200s-2.700-.8-3-2.200Z" fill="#8fe3ff"/>`)}
      </div>`;
  }
}

@customElement("app-root")
export class AppRoot extends LitElement {
  static styles = css`
    :host { display: flex; flex-direction: column; min-height: 100vh; background: #202020; }
  `;

  render() {
    return html`<browser-chrome></browser-chrome><block-page></block-page><task-bar></task-bar>`;
  }
}
